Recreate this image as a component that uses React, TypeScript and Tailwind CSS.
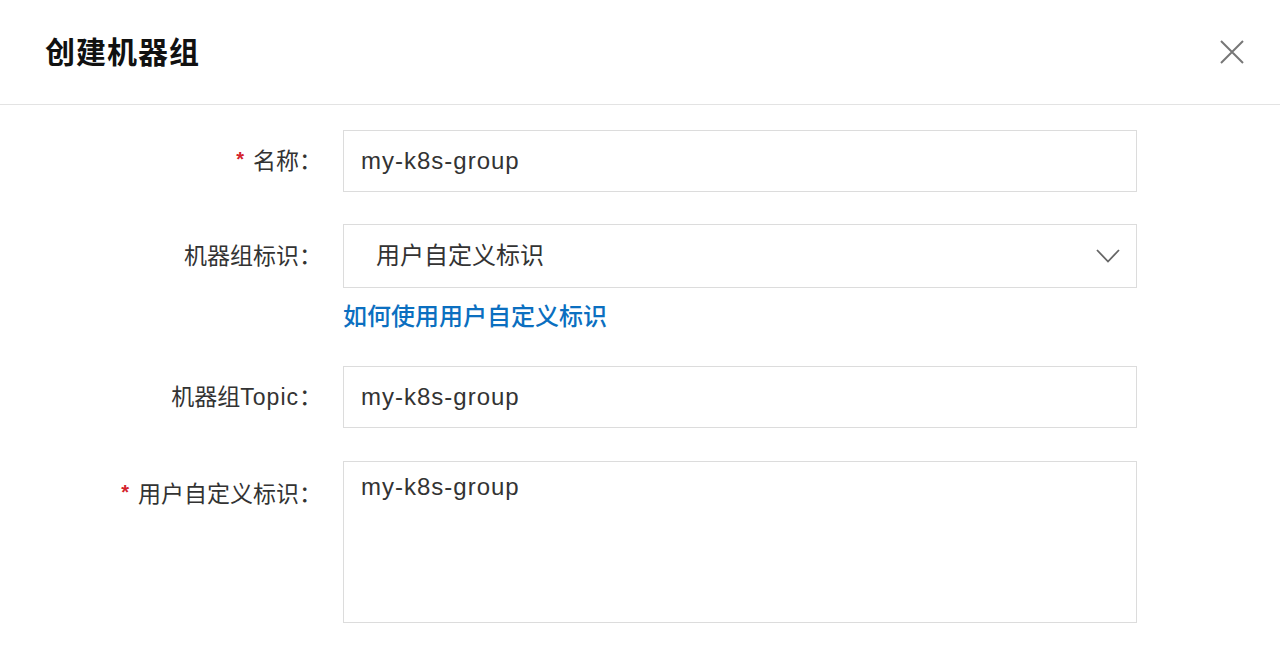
import React from 'react'

const font = { fontFamily: '"Liberation Sans", "Noto Sans CJK SC", sans-serif' }

const Label = ({ text, required }: { text: React.ReactNode; required?: boolean }) => (
  <div className="w-[313px] shrink-0 flex justify-end items-center text-[23px] text-[#333]">
    <span className="relative left-[9px] flex items-center">
      {required && <span className="text-[#d4232c] text-[20px] font-bold mr-[9px] relative -top-[2px]">*</span>}
      <span>{text}：</span>
    </span>
  </div>
)

const App = () => {
  return (
    <div className="w-[1280px] h-[668px] bg-white overflow-hidden" style={font}>
      <div className="h-[105px] border-b border-[#e3e3e3] flex items-center justify-between pl-[45px] pr-[36px]">
        <h2 className="text-[30px] font-bold text-[#111] tracking-[1px]">创建机器组</h2>
        <svg width="24" height="24" viewBox="0 0 24 24" className="text-[#777]">
          <path d="M1 1 L23 23 M23 1 L1 23" stroke="currentColor" strokeWidth="2" fill="none" />
        </svg>
      </div>

      <div className="pt-[25px]">
        <div className="flex items-center">
          <Label text="名称" required />
          <div className="ml-[30px] w-[794px] h-[62px] border border-[#dcdcdc] flex items-center pl-[17px] text-[24px] tracking-[1px] text-[#333]">
            my-k8s-group
          </div>
        </div>

        <div className="flex items-center mt-[32px]">
          <Label text="机器组标识" />
          <div className="ml-[30px] w-[794px] h-[64px] border border-[#dcdcdc] flex items-center justify-between pl-[32px] pr-[16px] text-[24px] text-[#333]">
            <span>用户自定义标识</span>
            <svg width="24" height="14" viewBox="0 0 24 14" className="text-[#666]">
              <path d="M1 1 L12 12.5 L23 1" stroke="currentColor" strokeWidth="1.8" fill="none" />
            </svg>
          </div>
        </div>
        <div className="ml-[343px] mt-[13px] text-[24px] text-[#0b6fc0] font-medium leading-[32px]">
          如何使用用户自定义标识
        </div>

        <div className="flex items-center mt-[33px]">
          <Label text={<>机器组<span className="tracking-[1px]">Topic</span></>} />
          <div className="ml-[30px] w-[794px] h-[62px] border border-[#dcdcdc] flex items-center pl-[17px] text-[24px] tracking-[1px] text-[#333]">
            my-k8s-group
          </div>
        </div>

        <div className="flex items-start mt-[33px]">
          <div className="pt-[16px]">
            <Label text="用户自定义标识" required />
          </div>
          <div className="ml-[30px] w-[794px] h-[162px] border border-[#dcdcdc] pl-[17px] pt-[7px] text-[24px] tracking-[1px] text-[#333]">
            my-k8s-group
          </div>
        </div>
      </div>
    </div>
  )
}

export default App
